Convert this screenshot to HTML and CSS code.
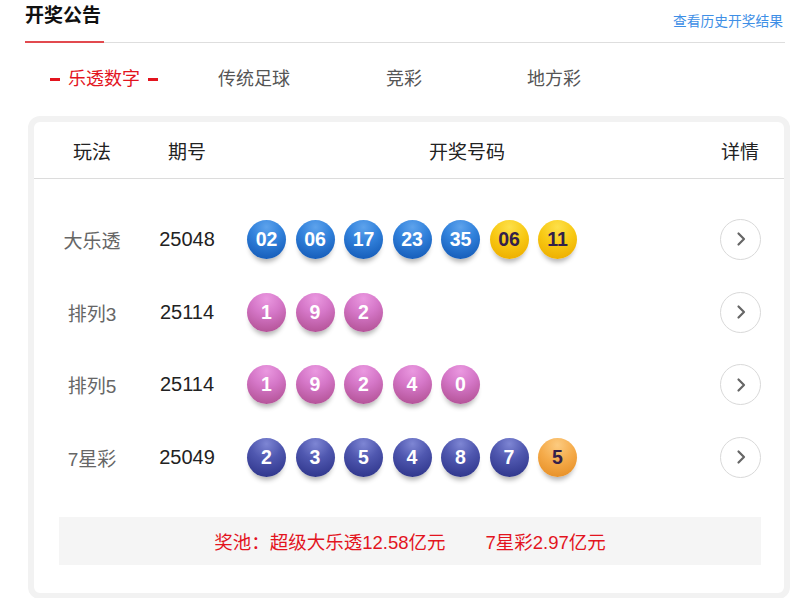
FILE: index.html
```html
<!DOCTYPE html>
<html lang="zh-CN">
<head>
<meta charset="utf-8">
<title>开奖公告</title>
<link rel="stylesheet" href="styles.css">
</head>
<body>
<div class="page">
  <div class="head">
    <div class="title">开奖公告</div>
    <a class="more">查看历史开奖结果</a>
  </div>
  <div class="tabs">
    <div class="tab active"><span class="dash"></span>乐透数字<span class="dash"></span></div>
    <div class="tab">传统足球</div>
    <div class="tab">竞彩</div>
    <div class="tab">地方彩</div>
  </div>
  <div class="card">
    <div class="thead">
      <div class="c1">玩法</div>
      <div class="c2">期号</div>
      <div class="c3">开奖号码</div>
      <div class="c4">详情</div>
    </div>
    <div class="rows">
      <div class="row">
        <div class="c1 name">大乐透</div>
        <div class="c2 issue">25048</div>
        <div class="c3 balls">
          <span class="ball blue">02</span><span class="ball blue">06</span><span class="ball blue">17</span><span class="ball blue">23</span><span class="ball blue">35</span><span class="ball yellow">06</span><span class="ball yellow">11</span>
        </div>
        <div class="c4"><span class="go"><svg viewBox="0 0 12 16" width="12" height="16"><path d="M3.5 2.5 L9 8 L3.5 13.5" fill="none" stroke="#666" stroke-width="2.2" stroke-linecap="round" stroke-linejoin="round"/></svg></span></div>
      </div>
      <div class="row">
        <div class="c1 name">排列3</div>
        <div class="c2 issue">25114</div>
        <div class="c3 balls">
          <span class="ball pink">1</span><span class="ball pink">9</span><span class="ball pink">2</span>
        </div>
        <div class="c4"><span class="go"><svg viewBox="0 0 12 16" width="12" height="16"><path d="M3.5 2.5 L9 8 L3.5 13.5" fill="none" stroke="#666" stroke-width="2.2" stroke-linecap="round" stroke-linejoin="round"/></svg></span></div>
      </div>
      <div class="row">
        <div class="c1 name">排列5</div>
        <div class="c2 issue">25114</div>
        <div class="c3 balls">
          <span class="ball pink">1</span><span class="ball pink">9</span><span class="ball pink">2</span><span class="ball pink">4</span><span class="ball pink">0</span>
        </div>
        <div class="c4"><span class="go"><svg viewBox="0 0 12 16" width="12" height="16"><path d="M3.5 2.5 L9 8 L3.5 13.5" fill="none" stroke="#666" stroke-width="2.2" stroke-linecap="round" stroke-linejoin="round"/></svg></span></div>
      </div>
      <div class="row">
        <div class="c1 name">7星彩</div>
        <div class="c2 issue">25049</div>
        <div class="c3 balls">
          <span class="ball navy">2</span><span class="ball navy">3</span><span class="ball navy">5</span><span class="ball navy">4</span><span class="ball navy">8</span><span class="ball navy">7</span><span class="ball orange">5</span>
        </div>
        <div class="c4"><span class="go"><svg viewBox="0 0 12 16" width="12" height="16"><path d="M3.5 2.5 L9 8 L3.5 13.5" fill="none" stroke="#666" stroke-width="2.2" stroke-linecap="round" stroke-linejoin="round"/></svg></span></div>
      </div>
    </div>
    <div class="pool"><span>奖池：超级大乐透12.58亿元</span><span class="pool2">7星彩2.97亿元</span></div>
  </div>
</div>
</body>
</html>
```
FILE: styles.css
```css
* { box-sizing: border-box; }
html, body { margin: 0; padding: 0; background: #fff; }
body {
  font-family: "Liberation Sans", "Noto Sans CJK SC", sans-serif;
  color: #222;
  overflow: hidden;
}
.page { width: 800px; }

.head {
  margin: 0 15px 0 25px;
  height: 43px;
  border-bottom: 1px solid #dedede;
  display: flex;
  justify-content: space-between;
}
.title {
  align-self: flex-end;
  font-size: 19px;
  font-weight: bold;
  line-height: 20px;
  color: #111;
  padding-bottom: 15px;
  border-bottom: 2px solid #e24a4f;
  margin-bottom: -1px;
  width: 79px;
}
.more {
  align-self: flex-start;
  margin-top: 14px;
  font-size: 13.75px;
  line-height: 15px;
  color: #3e8fe6;
  margin-right: 2px;
}

.tabs {
  display: flex;
  padding-left: 29px;
  margin-top: 24px;
}
.tab {
  width: 150px;
  text-align: center;
  font-size: 18px;
  line-height: 24px;
  color: #555;
  display: flex;
  justify-content: center;
  align-items: center;
}
.tab.active { color: #e3141e; }
.dash {
  display: inline-block;
  width: 10px;
  height: 3px;
  background: #e3141e;
  margin: 0 8px;
}

.card {
  margin: 25px 0 0 28px;
  width: 762px;
  border: 6px solid #f2f2f2;
  border-radius: 12px;
  background: #fff;
  padding-bottom: 28px;
}
.thead, .row {
  display: grid;
  grid-template-columns: 116px 74px 1fr 88px;
  align-items: center;
}
.thead {
  height: 57px;
  border-bottom: 1px solid #dcdcdc;
  font-size: 19px;
  color: #222;
}
.c1, .c2, .c4 { text-align: center; }
.thead .c3 { text-align: center; padding-left: 14px; }

.rows { padding-top: 24px; }
.row { height: 72.7px; }
.name { font-size: 19px; color: #666; }
.issue { font-size: 20px; color: #222; }
.balls {
  display: flex;
  gap: 9.5px;
  padding-left: 23px;
}
.ball {
  width: 39px;
  height: 39px;
  border-radius: 50%;
  display: flex;
  align-items: center;
  justify-content: center;
  font-size: 19.5px;
  font-weight: bold;
  color: #fff;
  box-shadow: 0 6px 5px -3px rgba(0,0,0,0.3);
}
.ball.blue {
  background: radial-gradient(circle at 50% 18%, #5ea3ec 0%, #3282dc 40%, #1a62be 80%, #1858b0 100%);
}
.ball.yellow {
  background: radial-gradient(circle at 50% 18%, #fde04a 0%, #f8c914 45%, #eeb000 85%, #e6a400 100%);
  color: #33204a;
}
.ball.pink {
  background: radial-gradient(circle at 50% 15%, #ea98e0 0%, #d577c8 40%, #b9599f 80%, #a9498e 100%);
}
.ball.navy {
  background: radial-gradient(circle at 50% 15%, #7e86d4 0%, #5058b0 40%, #353c92 80%, #2a2f7c 100%);
}
.ball.orange {
  background: radial-gradient(circle at 50% 18%, #fccb80 0%, #f5ab4a 45%, #e8922a 85%, #e08820 100%);
  color: #33204a;
}
.go {
  display: inline-flex;
  width: 41px;
  height: 41px;
  border: 1px solid #d9d9d9;
  border-radius: 50%;
  align-items: center;
  justify-content: center;
  vertical-align: middle;
}
.go svg { margin-left: 2px; }

.pool {
  margin: 23px 23px 0 25px;
  height: 48px;
  background: #f5f5f5;
  display: flex;
  justify-content: center;
  align-items: center;
  font-size: 18.5px;
  color: #e3141e;
}
.pool2 { margin-left: 40px; }
```
